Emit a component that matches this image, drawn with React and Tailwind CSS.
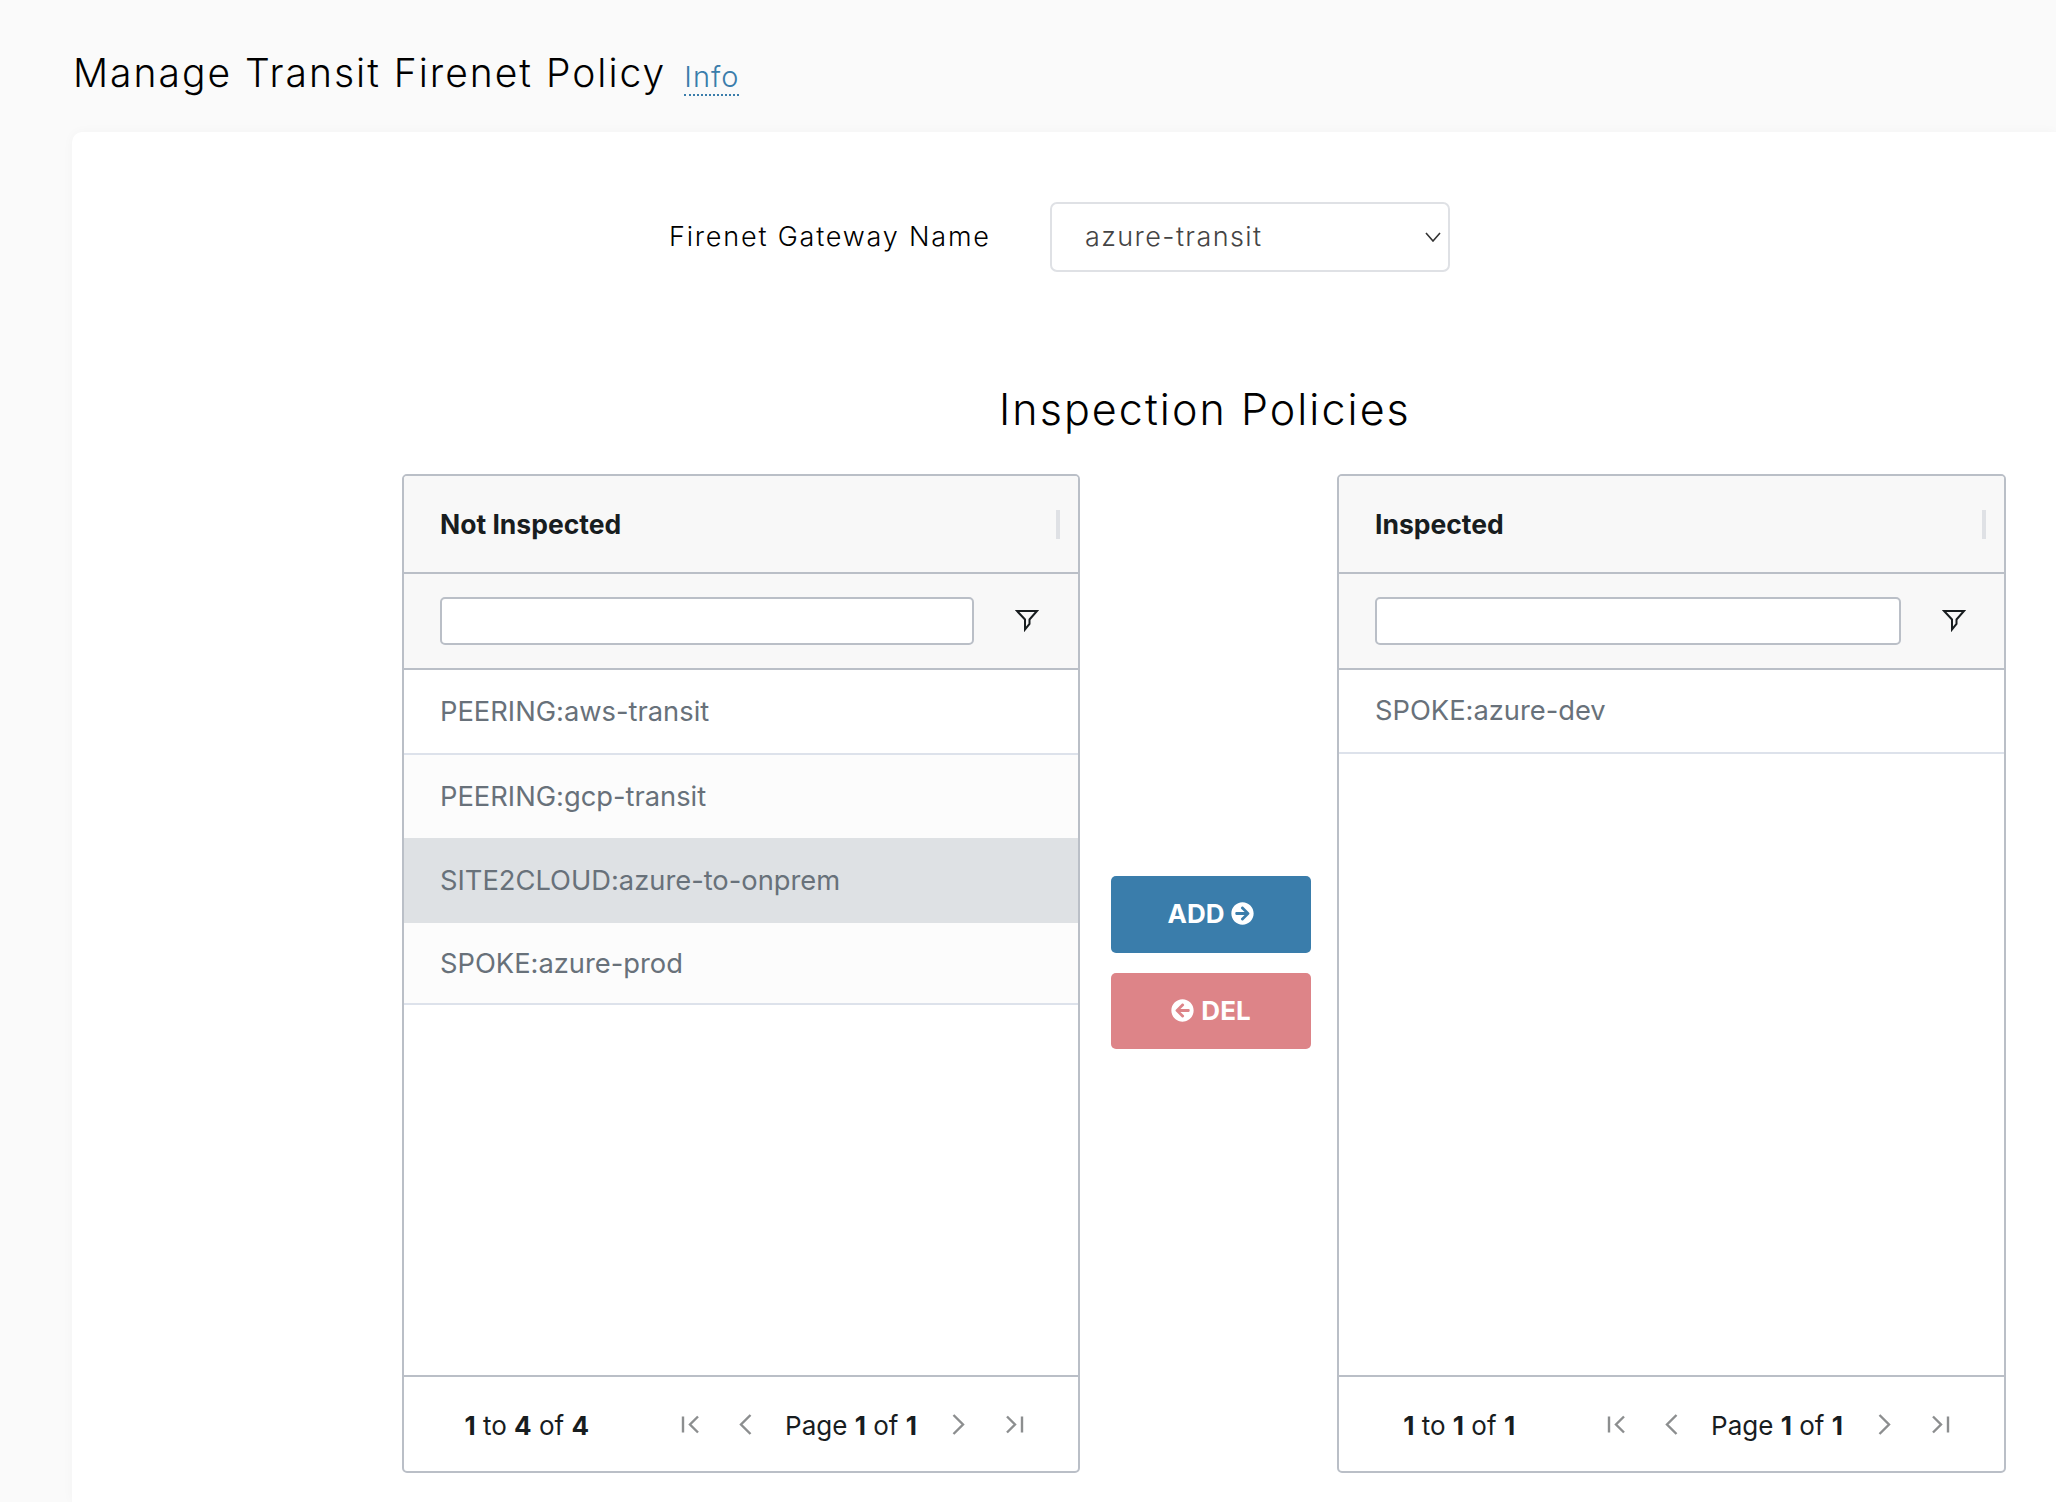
import { FaArrowCircleRight, FaArrowCircleLeft } from 'react-icons/fa';

function FilterIcon() {
  return (
    <svg width="24" height="23" viewBox="0 0 24 23" fill="none" stroke="#181d1f" strokeWidth="2">
      <path d="M2 2H22L14.5 10.5V15L10 20.5V10.5Z" strokeLinejoin="miter" />
    </svg>
  );
}

function PageIcon({ type }) {
  const icons = {
    first: { w: 19, d: 'M2 2.5V18.5M17 2.5L9 10.5L17 18.5' },
    prev: { w: 14, d: 'M12.5 1L3 10.5L12.5 20' },
    next: { w: 14, d: 'M1.5 1L11 10.5L1.5 20' },
    last: { w: 19, d: 'M17 2.5V18.5M2 2.5L10 10.5L2 18.5' },
  };
  const icon = icons[type];
  return (
    <svg className="block" width={icon.w} height="21" viewBox={`0 0 ${icon.w} 21`} fill="none" stroke="#8c8e8f" strokeWidth="2.4">
      <path d={icon.d} />
    </svg>
  );
}

function Panel({ title, width, rows, total, inputWidth }) {
  return (
    <div className={`${width} h-[999px] shrink-0 flex flex-col border-2 border-[#babfc7] rounded-[5px] bg-white overflow-hidden`}>
      <div className="h-[98px] shrink-0 flex items-center justify-between pl-[36px] pr-[18px] bg-[#f8f8f8] border-b-2 border-[#babfc7]">
        <span className="pt-[2px] text-[26.5px] font-bold text-[#181d1f]">{title}</span>
        <span className="w-[4px] h-[29px] bg-[#dfe1e5]"></span>
      </div>
      <div className="h-[96px] shrink-0 flex items-center pl-[36px] bg-[#f8f8f8] border-b-2 border-[#babfc7]">
        <input type="text" className={`${inputWidth} h-[48px] bg-white border-2 border-[#babfc7] rounded-[5px]`} />
        <div className="flex-1 flex justify-center pl-[2px] pb-[2px]">
          <FilterIcon />
        </div>
      </div>
      <div className="flex-1">
        {rows.map((r) => (
          <div key={r.name} className={`${r.cls} pl-[36px] pt-[2px] flex items-center text-[27.3px] text-[#68717a]`}>
            {r.name}
          </div>
        ))}
      </div>
      <div className="h-[96px] pr-[54px] shrink-0 flex items-center justify-end border-t-2 border-[#babfc7] text-[26px] text-[#181d1f]">
        <span className="mr-[92px] mt-[3px]"><b>1</b> to <b>{total}</b> of <b>{total}</b></span>
        <span className="mr-[38px]"><PageIcon type="first" /></span>
        <span className="mr-[33px]"><PageIcon type="prev" /></span>
        <span className="mr-[35px] mt-[3px]">Page <b>1</b> of <b>1</b></span>
        <span className="mr-[39px]"><PageIcon type="next" /></span>
        <PageIcon type="last" />
      </div>
    </div>
  );
}

const notInspected = [
  { name: 'PEERING:aws-transit', cls: 'h-[85px] border-b-2 border-[#dde2eb] bg-white' },
  { name: 'PEERING:gcp-transit', cls: 'h-[83px] bg-[#fcfcfc]' },
  { name: 'SITE2CLOUD:azure-to-onprem', cls: 'h-[85px] bg-[#dee1e4]' },
  { name: 'SPOKE:azure-prod', cls: 'h-[82px] border-b-2 border-[#dde2eb] bg-[#fcfcfc]' },
];

const inspected = [
  { name: 'SPOKE:azure-dev', cls: 'h-[84px] pb-[2px] border-b-2 border-[#dde2eb] bg-white' },
];

export default function App() {
  return (
    <div className="h-[1502px] overflow-hidden bg-[#fafafa] flex flex-col" style={{ fontFamily: 'Inter, sans-serif' }}>
      <div className="h-[132px] shrink-0 pl-[73px] pt-[49px] flex items-start">
        <h1 className="text-[39px] leading-[48px] font-light text-black tracking-[2px]">Manage Transit Firenet Policy</h1>
        <a className="ml-[18px] mt-[11px] text-[29px] leading-[34px] font-light text-[#3a7dab] tracking-[1px] border-b-2 border-dotted border-[#3a7dab]">Info</a>
      </div>
      <div className="flex-1 ml-[72px] bg-white rounded-tl-[10px] shadow-[0_0_12px_rgba(0,0,0,0.03)]">
        <div className="h-[70px]"></div>
        <div className="flex items-center pl-[597px]">
          <label className="w-[381px] text-[27px] font-light text-black tracking-[1.8px]">Firenet Gateway Name</label>
          <div className="relative w-[400px] h-[70px] border-2 border-[#dfe1e5] rounded-[7px] flex items-center pl-[33px] text-[27px] font-light text-[#444] tracking-[1.4px]">
            azure-transit
            <svg className="absolute right-[7px] top-[28px]" width="16" height="10" viewBox="0 0 16 10" fill="none" stroke="#333" strokeWidth="1.6">
              <path d="M1 1L8 9L15 1" />
            </svg>
          </div>
        </div>
        <h2 className="mt-[107px] pl-[927px] text-[43px] leading-[60px] font-light text-black tracking-[2.05px] whitespace-nowrap">Inspection Policies</h2>
        <div className="mt-[35px] flex items-start pl-[330px]">
          <Panel title="Not Inspected" width="w-[678px]" rows={notInspected} total={4} inputWidth="w-[534px]" />
          <div className="w-[257px] shrink-0 pl-[31px] pt-[402px] flex flex-col gap-[20px]">
            <button className="w-[200px] h-[77px] pb-[2px] rounded-[5px] bg-[#3a7dab] text-white font-bold text-[26px] flex items-center justify-center gap-[7px]">
              ADD <FaArrowCircleRight size={23} />
            </button>
            <button className="w-[200px] h-[76px] pb-[2px] rounded-[5px] bg-[#dd8488] text-white font-bold text-[26px] flex items-center justify-center gap-[7px]">
              <FaArrowCircleLeft size={23} /> DEL
            </button>
          </div>
          <Panel title="Inspected" width="w-[669px]" rows={inspected} total={1} inputWidth="w-[526px]" />
        </div>
      </div>
    </div>
  );
}
